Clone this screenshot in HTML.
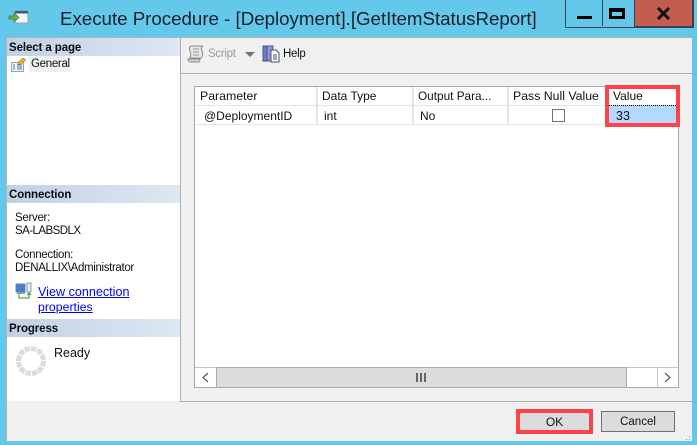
<!DOCTYPE html>
<html><head><meta charset="utf-8">
<style>
html,body{margin:0;padding:0}
body{width:697px;height:445px;overflow:hidden;background:#63c8ea;position:relative;font-family:"Liberation Sans",sans-serif;font-size:12px;color:#111}
.a{position:absolute}
.t{position:absolute;white-space:nowrap;line-height:13px}
.hd{position:absolute;left:7px;width:173px;height:18px;background:linear-gradient(90deg,#c2d1e2,#dce8f3)}
.hd span{position:absolute;left:2px;top:3px;font-weight:bold;font-size:11.5px;line-height:14px;color:#0a0a14;letter-spacing:-.1px}
.sep{position:absolute;background:#e4e4e4}
</style></head><body>
<!-- title bar -->
<svg class="a" style="left:8px;top:10px" width="22" height="16" viewBox="0 0 22 16">
<rect x="7" y="1" width="13" height="12" fill="#f4f8fc" stroke="#8aa0b8"/>
<rect x="7" y="1" width="13" height="2.5" fill="#3c5a86"/>
<path d="M1 6h5V3l5 4.5-5 4.5V9H1z" fill="#6fae4c" stroke="#3f7a2c" stroke-width=".7"/>
</svg>
<div class="t" style="left:60px;top:8px;font-size:18.7px;line-height:22px;color:#16202a">Execute Procedure - [Deployment].[GetItemStatusReport]</div>
<!-- window buttons -->
<div class="a" style="left:565px;top:-1px;width:127px;height:27px;border:1px solid #35444f;background:#63c8ea"></div>
<div class="a" style="left:602px;top:0;width:1px;height:26px;background:#35444f"></div>
<div class="a" style="left:634px;top:0;width:59px;height:27px;background:#c55c50;border-left:1px solid #35444f;border-right:1px solid #35444f;border-bottom:1px solid #35444f;box-sizing:border-box"></div>
<div class="a" style="left:577px;top:16px;width:15px;height:3px;background:#000"></div>
<div class="a" style="left:609px;top:8px;width:16px;height:11px;border:3px solid #000;border-top-width:4px;box-sizing:border-box"></div>
<svg class="a" style="left:656px;top:7px" width="15" height="13" viewBox="0 0 15 13"><path d="M2 1l11 11M13 1L2 12" stroke="#111" stroke-width="3" fill="none"/></svg>

<!-- window body -->
<div class="a" style="left:6px;top:37px;width:686px;height:404px;background:#f0f0f0;box-shadow:inset 0 1px 0 #b4b4b4,inset 1px 0 0 #b4b4b4"></div>
<!-- left panel -->
<div class="a" style="left:7px;top:38px;width:173px;height:363px;background:#fff"></div>
<div class="a" style="left:180px;top:38px;width:1px;height:364px;background:#a8a8b0"></div>
<div class="hd" style="top:38px"><span>Select a page</span></div>
<svg class="a" style="left:10px;top:57px" width="17" height="15" viewBox="0 0 17 15">
<path d="M1.5 5.5h12v9h-12z" fill="#f2f6fc" stroke="#8fa3c6"/>
<path d="M3 8h2M7 8h5M3 10h2M7 10h5M3 12h2M7 12h5" stroke="#4a70b4"/>
<path d="M8 5l5-4 3 2-5 4-3 .5z" fill="#e0b23e" stroke="#8f6a18" stroke-width=".5"/>
</svg>
<div class="a" style="left:29px;top:56px;width:41px;height:16px;background:#f0f0f0"></div>
<div class="t" style="left:31px;top:58px;font-size:11.5px;letter-spacing:-.3px">General</div>

<div class="hd" style="top:185px"><span>Connection</span></div>
<div class="t" style="left:15px;top:212px;font-size:11.5px;letter-spacing:-.3px">Server:</div>
<div class="t" style="left:15px;top:225px;font-size:11.5px;letter-spacing:-.55px">SA-LABSDLX</div>
<div class="t" style="left:15px;top:249px;font-size:11.5px;letter-spacing:-.3px">Connection:</div>
<div class="t" style="left:15px;top:262px;font-size:11.5px;letter-spacing:-.35px">DENALLIX\Administrator</div>
<svg class="a" style="left:15px;top:282px" width="18" height="17" viewBox="0 0 18 17">
<rect x="1" y="2" width="9" height="8" fill="#3f7fd8" stroke="#6d7f99"/>
<rect x="12" y="1" width="4" height="9" fill="#e6ebf2" stroke="#8e9aab"/>
<path d="M2 11h8" stroke="#8e9aab" stroke-width="2"/>
<path d="M4 12v4h10v-4M12 13l2-2 2 2" stroke="#2f9a2a" fill="none"/>
</svg>
<div class="t" style="left:38px;top:286px;color:#0000ee;text-decoration:underline;font-size:12.6px">View connection</div>
<div class="t" style="left:38px;top:301px;color:#0000ee;text-decoration:underline;font-size:12.3px">properties</div>
<div class="hd" style="top:319px"><span>Progress</span></div>
<svg class="a" style="left:16px;top:346px" width="30" height="30" viewBox="0 0 30 30"><circle cx="15" cy="15" r="12.5" fill="none" stroke="#dcdcdc" stroke-width="5" stroke-dasharray="5.5 1"/></svg>
<div class="t" style="left:54px;top:347px;font-size:12.5px">Ready</div>

<!-- toolbar -->
<div class="a" style="left:181px;top:38px;width:511px;height:35px;background:#f0f0f0"></div>
<div class="a" style="left:181px;top:73px;width:511px;height:1px;background:#b0b0b0"></div>
<svg class="a" style="left:187px;top:45px" width="19" height="18" viewBox="0 0 19 18">
<path d="M4 1h12c-2 1-2 3-1 5s1 6-1 7H3c1-2 1-5 0-7S2 2 4 1z" fill="#e6e6e6" stroke="#8c8c8c"/>
<path d="M1 14h12c0 1 0 2-1 3H3c-1 0-2-1-2-3z" fill="#d2d2d2" stroke="#8c8c8c"/>
<path d="M6 4h6M6 7h6M6 10h6" stroke="#9a9a9a"/>
</svg>
<div class="t" style="left:208px;top:48px;font-size:11.5px;letter-spacing:-.3px;color:#9a9a9a">Script</div>
<div class="a" style="left:245px;top:52px;width:0;height:0;border-left:5px solid transparent;border-right:5px solid transparent;border-top:5px solid #707070"></div>
<svg class="a" style="left:262px;top:45px" width="18" height="18" viewBox="0 0 18 18">
<rect x="1" y="1" width="7" height="15" fill="#6d7fc0" stroke="#45558f"/>
<rect x="5" y="1" width="6" height="15" fill="#8c9ad0" stroke="#45558f"/>
<path d="M9 5h5l3 3v9H9z" fill="#fff" stroke="#46506e"/>
<path d="M11 10h4M11 12h4M11 14h4" stroke="#46506e"/>
</svg>
<div class="t" style="left:283px;top:48px;font-size:11.5px;letter-spacing:-.3px;color:#111">Help</div>

<!-- table area -->
<div class="a" style="left:180px;top:74px;width:512px;height:328px;border-left:1px solid #b0b0b0;border-bottom:1px solid #b0b0b0;box-sizing:border-box"></div>
<div class="a" style="left:194px;top:86px;width:485px;height:302px;background:#fff;border:1px solid #a8a8a8;box-sizing:border-box"></div>
<div class="sep" style="left:195px;top:105px;width:483px;height:1px"></div>
<div class="sep" style="left:195px;top:124px;width:483px;height:1px"></div>
<div class="sep" style="left:316px;top:87px;width:2px;height:37px"></div>
<div class="sep" style="left:412px;top:87px;width:2px;height:37px"></div>
<div class="sep" style="left:507px;top:87px;width:2px;height:37px"></div>
<div class="t" style="left:200px;top:90px;font-size:12.3px">Parameter</div>
<div class="t" style="left:322px;top:90px">Data Type</div>
<div class="t" style="left:418px;top:90px;font-size:11.8px">Output Para...</div>
<div class="t" style="left:513px;top:90px;font-size:12.3px">Pass Null Value</div>
<div class="t" style="left:204px;top:110px">@DeploymentID</div>
<div class="t" style="left:324px;top:110px">int</div>
<div class="t" style="left:420px;top:110px">No</div>
<div class="a" style="left:552px;top:109px;width:13px;height:13px;border:1px solid #707070;background:#fff;box-sizing:border-box"></div>
<!-- value -->
<div class="a" style="left:609px;top:105px;width:67px;height:19px;background:#b5d8ff;border-top:1px dotted #000;box-sizing:border-box"></div>
<div class="t" style="left:613px;top:90px">Value</div>
<div class="t" style="left:616px;top:110px;font-size:12.5px">33</div>
<div class="a" style="left:605px;top:85px;width:75px;height:42px;border:4px solid #ff414b;box-sizing:border-box"></div>

<!-- scrollbar -->
<div class="a" style="left:195px;top:367px;width:483px;height:20px;background:#fff;border-top:1px solid #c4c4c4;box-sizing:border-box"></div>
<div class="a" style="left:216px;top:367px;width:411px;height:21px;background:#dcdcdc;border:1px solid #ababab;box-sizing:border-box"></div>
<div class="a" style="left:657px;top:368px;width:1px;height:19px;background:#c8c8c8"></div>
<div class="a" style="left:416px;top:373px;width:2px;height:9px;background:#666"></div>
<div class="a" style="left:420px;top:373px;width:2px;height:9px;background:#666"></div>
<div class="a" style="left:424px;top:373px;width:2px;height:9px;background:#666"></div>
<svg class="a" style="left:200px;top:371px" width="12" height="13" viewBox="0 0 12 13"><path d="M8 2L3 6.5 8 11" stroke="#606060" stroke-width="1.3" fill="none"/></svg>
<svg class="a" style="left:662px;top:371px" width="12" height="13" viewBox="0 0 12 13"><path d="M3 2l5 4.5L3 11" stroke="#606060" stroke-width="1.3" fill="none"/></svg>

<!-- buttons -->
<div class="a" style="left:516px;top:409px;width:77px;height:25px;border:4px solid #ff414b;background:#dcdcdc;box-sizing:border-box"></div>
<div class="t" style="left:516px;top:416px;width:77px;text-align:center;font-size:12px">OK</div>
<div class="a" style="left:601px;top:411px;width:74px;height:21px;border:1px solid #707070;background:#dcdcdc;box-sizing:border-box"></div>
<div class="t" style="left:601px;top:416px;width:74px;text-align:center;font-size:11.5px">Cancel</div>
<!-- grip -->
<svg class="a" style="left:684px;top:433px" width="8" height="8"><path d="M5 6h1v1H5zM2 6h1v1H2zM5 3h1v1H5z" fill="#9a9a9a"/></svg>
</body></html>
